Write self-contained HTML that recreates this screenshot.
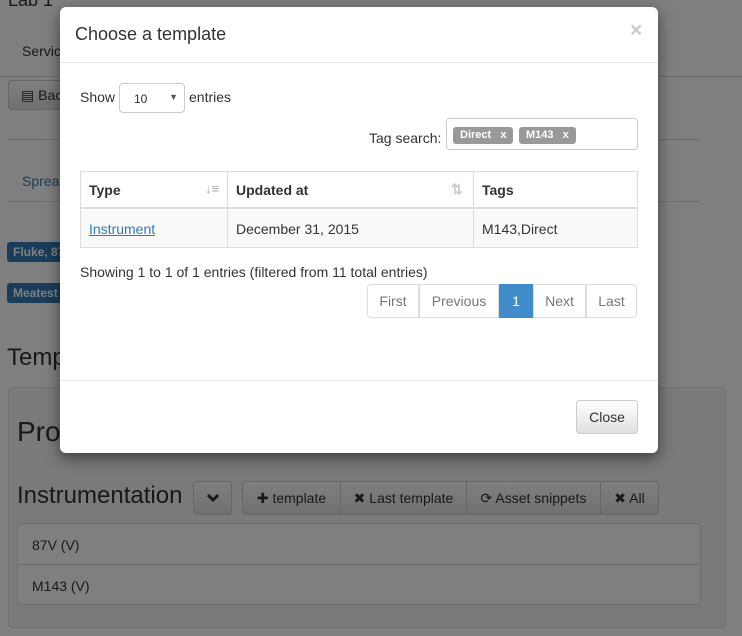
<!DOCTYPE html>
<html><head><style>
*{box-sizing:border-box}
body{margin:0;width:742px;height:636px;overflow:hidden;font-family:"Liberation Sans",sans-serif;font-size:14px;color:#333;background:#fff;position:relative}
.a{position:absolute}
.btn{position:absolute;border:1px solid #ccc;border-radius:4px;background:linear-gradient(#fff,#e0e0e0);color:#333;font-size:14px;display:flex;align-items:center;justify-content:center}
.badge{position:absolute;background:#337ab7;color:#fff;font-weight:bold;font-size:12px;border-radius:3px;padding:3px 6px}
#ov{position:absolute;left:0;top:0;width:742px;height:636px;background:rgba(0,0,0,.5)}
#m{position:absolute;left:60px;top:7px;width:598px;height:446px;background:#fff;border-radius:6px;box-shadow:0 5px 15px rgba(0,0,0,.5)}
.pg{position:absolute;top:284px;height:34px;border:1px solid #ddd;color:#777;display:flex;align-items:center;justify-content:center;margin-left:-1px}
.tag{position:absolute;top:8px;height:17px;background:#999;color:#fff;font-size:11px;font-weight:bold;border-radius:3px;padding:2px 7px;white-space:nowrap}
</style></head><body>
<div class="a" style="left:8px;top:-10px;font-size:18px">Lab 1</div>
<div class="a" style="left:22px;top:43px">Services</div>
<div class="a" style="left:0;top:76px;width:742px;border-top:1px solid #ddd"></div>
<div class="btn" style="left:8px;top:80px;width:100px;height:30px;justify-content:flex-start;padding-left:12px">▤ Back</div>
<div class="a" style="left:8px;top:139px;width:692px;border-top:1px solid #ddd"></div>
<div class="a" style="left:22px;top:173px;color:#337ab7">Spreadsheet</div>
<div class="a" style="left:8px;top:201px;width:692px;border-top:1px solid #ddd"></div>
<div class="badge" style="left:7px;top:242px">Fluke, 87V</div>
<div class="badge" style="left:7px;top:283px">Meatest</div>
<div class="a" style="left:7px;top:344px;font-size:24px">Templates</div>
<div class="a" style="left:8px;top:387px;width:718px;height:241px;background:#f5f5f5;border:1px solid #e3e3e3;border-radius:4px"></div>
<div class="a" style="left:17px;top:416px;font-size:28px">Procedure</div>
<div class="a" style="left:17px;top:482px;font-size:24px">Instrumentation</div>
<div class="btn" style="left:193px;top:481px;width:39px;height:34px"><svg width="12" height="10" viewBox="0 0 12 10"><path d="M1 2 L6 7 L11 2" stroke="#333" stroke-width="3" fill="none"/></svg></div>
<div class="btn" style="left:242px;top:481px;width:99px;height:34px;border-radius:4px 0 0 4px">✚ template</div>
<div class="btn" style="left:340px;top:481px;width:127px;height:34px;border-radius:0">✖ Last template</div>
<div class="btn" style="left:466px;top:481px;width:135px;height:34px;border-radius:0">⟳ Asset snippets</div>
<div class="btn" style="left:600px;top:481px;width:59px;height:34px;border-radius:0 4px 4px 0">✖ All</div>
<div class="a" style="left:17px;top:523px;width:684px;height:82px;background:#fff;border:1px solid #ddd;border-radius:4px"></div>
<div class="a" style="left:17px;top:564px;width:684px;border-top:1px solid #ddd"></div>
<div class="a" style="left:32px;top:537px">87V (V)</div>
<div class="a" style="left:32px;top:578px">M143 (V)</div>
<div id="ov"></div>
<div id="m">
<div class="a" style="left:15px;top:17px;font-size:18px">Choose a template</div>
<div class="a" style="left:570px;top:12px;font-size:21px;font-weight:bold;color:#ccc">×</div>
<div class="a" style="left:0;top:55px;width:598px;border-top:1px solid #e5e5e5"></div>
<div class="a" style="left:20px;top:82px">Show</div>
<div class="a" style="left:59px;top:76px;width:66px;height:30px;border:1px solid #ccc;border-radius:4px;font-size:12px;padding:8px 14px">10<span style="position:absolute;right:6px;top:8px;font-size:9px;color:#555">▼</span></div>
<div class="a" style="left:129px;top:82px">entries</div>
<div class="a" style="left:309px;top:123px">Tag search:</div>
<div class="a" style="left:386px;top:111px;width:192px;height:32px;border:1px solid #ccc;border-radius:4px">
<div class="tag" style="left:6px">Direct &nbsp; x</div><div class="tag" style="left:72px">M143 &nbsp; x</div></div>
<div class="a" style="left:20px;top:164px;width:558px;height:77px;border:1px solid #ddd">
<div class="a" style="left:0;top:0;width:556px;height:37px;border-bottom:2px solid #ddd;font-weight:bold">
<div class="a" style="left:8px;top:10px">Type</div><div class="a" style="left:124px;top:9px;color:#aaa;font-size:13px">↓≡</div>
<div class="a" style="left:155px;top:10px">Updated at</div><div class="a" style="left:370px;top:9px;color:#ccc">⇅</div>
<div class="a" style="left:401px;top:10px">Tags</div></div>
<div class="a" style="left:0;top:39px;width:556px;height:36px;background:#f9f9f9">
<div class="a" style="left:8px;top:10px;color:#337ab7;text-decoration:underline">Instrument</div>
<div class="a" style="left:155px;top:10px">December 31, 2015</div>
<div class="a" style="left:401px;top:10px">M143,Direct</div></div>
<div class="a" style="left:146px;top:0;height:75px;border-left:1px solid #ddd"></div>
<div class="a" style="left:392px;top:0;height:75px;border-left:1px solid #ddd"></div>
</div>
<div class="a" style="left:20px;top:257px">Showing 1 to 1 of 1 entries (filtered from 11 total entries)</div>
<div style="position:absolute;left:-60px;top:-7px">
<div class="pg" style="left:368px;width:52px;border-radius:4px 0 0 4px">First</div>
<div class="pg" style="left:420px;width:80px">Previous</div>
<div class="pg" style="left:500px;width:34px;background:#428bca;border-color:#428bca;color:#fff">1</div>
<div class="pg" style="left:534px;width:53px">Next</div>
<div class="pg" style="left:587px;width:51px;border-radius:0 4px 4px 0">Last</div>
</div>
<div class="a" style="left:0;top:373px;width:598px;border-top:1px solid #e5e5e5"></div>
<div class="btn" style="left:516px;top:393px;width:62px;height:34px">Close</div>
</div>
</body></html>
